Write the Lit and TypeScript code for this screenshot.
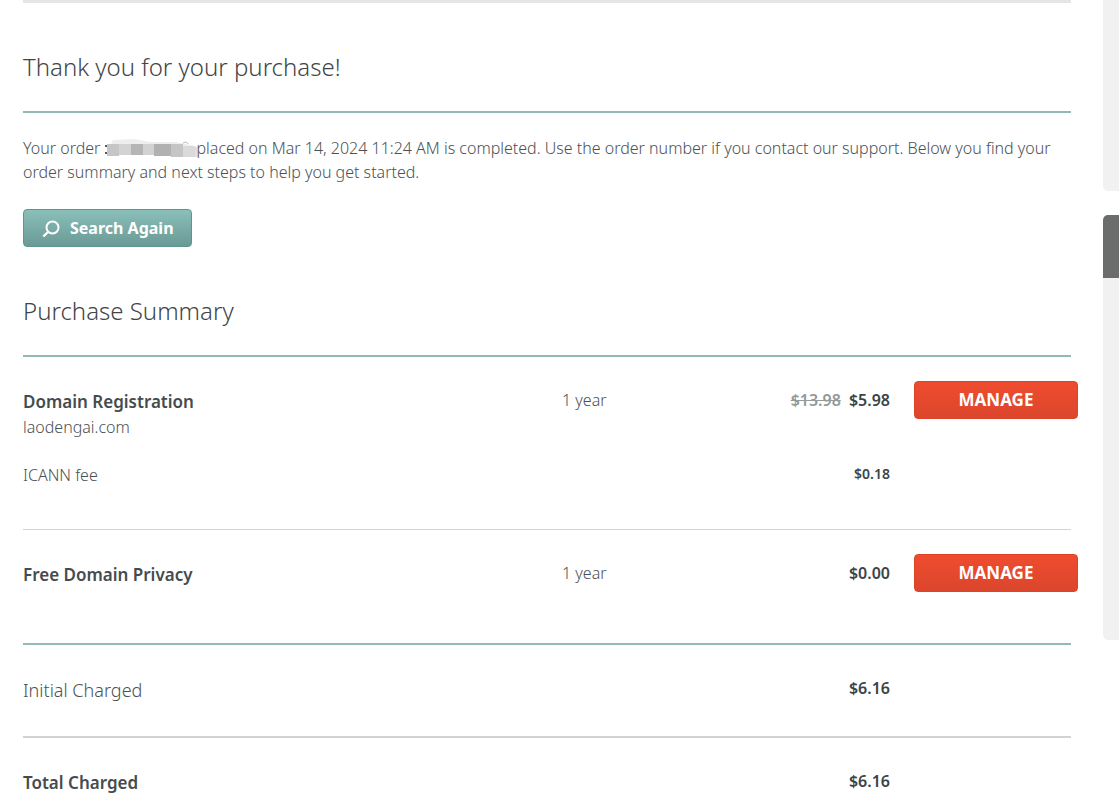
import { LitElement, html, css, svg } from "lit";
import { customElement } from "lit/decorators.js";

interface Cell {
  x: number;
  w: number;
  top: number;
  bottom: number;
  fill: string;
}

const MASK_CELLS: Cell[] = [
  { x: 2, w: 12, top: 6, bottom: 18, fill: "#c6c6c8" },
  { x: 14, w: 12, top: 6, bottom: 17, fill: "#d3d3d4" },
  { x: 26, w: 12, top: 6, bottom: 17, fill: "#b5b5b6" },
  { x: 38, w: 11, top: 6, bottom: 17, fill: "#d2d2d3" },
  { x: 49, w: 17, top: 6, bottom: 18, fill: "#b1b1b2" },
  { x: 66, w: 12, top: 6, bottom: 19, fill: "#c5c5c6" },
  { x: 78, w: 12, top: 8, bottom: 19, fill: "#dadada" },
  { x: 90, w: 3, top: 9, bottom: 19, fill: "#f0dccf" },
];

@customElement("app-root")
export class AppRoot extends LitElement {
  static styles = css`
    :host {
      display: block;
      background: #fff;
      color: #4b5154;
      font-family: "Noto Sans", "Open Sans", sans-serif;
      font-size: 16px;
      font-weight: 300;
      line-height: 24px;
    }
    .page {
      display: flex;
      gap: 32px;
      padding-left: 23px;
      overflow: hidden;
    }
    .main {
      flex: 1;
      min-width: 0;
      border-top: 3px solid #e5e5e5;
    }
    .heading {
      margin: 0;
      padding: 48px 0 28px;
      border-bottom: 2px solid #91bab5;
      font-size: 24px;
      line-height: 32px;
      font-weight: 300;
      color: #3f4548;
    }
    .intro {
      margin: 23px 0 25px;
    }
    .mask {
      display: inline-block;
      vertical-align: -4px;
      overflow: visible;
    }
    .button {
      box-sizing: border-box;
      height: 38px;
      border-radius: 4px;
      font-family: inherit;
      line-height: 24px;
      font-weight: 700;
      color: #fff;
      cursor: pointer;
    }
    .search {
      display: flex;
      align-items: center;
      gap: 10px;
      padding: 0 17px 0 18px;
      border: 1px solid #5f9590;
      background: linear-gradient(#8abfba, #6a9a95);
      font-size: 16px;
    }
    .glyph {
      margin-top: 2px;
    }
    .manage {
      display: block;
      width: 164px;
      padding: 0;
      border: 1px solid #dc4327;
      background: linear-gradient(#ef4c2f, #db462c);
      font-size: 17px;
    }
    .summary {
      width: 100%;
      border-spacing: 0;
      table-layout: fixed;
    }
    .summary th,
    .summary td {
      padding: 0;
      text-align: left;
      vertical-align: top;
      font-weight: 300;
    }
    .col-price {
      width: 160px;
    }
    .col-term {
      width: 168px;
    }
    .col-action {
      width: 181px;
    }
    .summary .item {
      padding-top: 33px;
    }
    .summary .term,
    .summary .price {
      padding-top: 31px;
    }
    .summary .price {
      text-align: right;
      font-weight: 600;
      color: #3d4446;
      white-space: nowrap;
    }
    .summary .action {
      padding: 24px 0 0 24px;
    }
    .name {
      display: block;
      font-size: 17px;
      font-weight: 600;
      color: #454c4e;
    }
    .label {
      display: block;
      font-size: 18px;
    }
    .domain {
      display: block;
      margin-top: 1px;
    }
    .old {
      margin-right: 4px;
      color: #949a9a;
    }
    .summary .fee th,
    .summary .fee td {
      padding: 24px 0 42px;
      border-bottom: 1px solid #d3d3d3;
    }
    .summary .fee .price {
      padding-top: 23px;
      font-size: 14px;
    }
    .summary .privacy th,
    .summary .privacy td {
      padding-bottom: 51px;
      border-bottom: 2px solid #91bab8;
    }
    .summary .charge .item {
      padding-bottom: 34px;
    }
    .summary .initial th,
    .summary .initial td {
      border-bottom: 2px solid #d3d3d3;
    }
    .summary .total .item {
      padding-bottom: 8px;
    }
    .rail {
      flex: none;
      width: 16px;
    }
    .panel {
      height: 191px;
      border-radius: 0 0 0 5px;
      background: #f1f1f1;
    }
    .tab {
      height: 63px;
      margin-top: 24px;
      border-radius: 5px 0 0 0;
      background: #6b6d6d;
    }
    .tall {
      height: 362px;
    }
  `;

  private mask() {
    return html`<svg class="mask" width="92" height="20" viewBox="0 0 92 20" role="img" aria-label="hidden order number">
      <path d="M8 2 L30 1 L44 4 L70 4 L86 7 L93 9 L93 12 L3 12 Z" fill="#eeeeee" />
      <path d="M0 7h2v2H0zM0 14h2v2H0z" fill="#55595c" />
      <path d="M78 5q4 -2 5 1" fill="none" stroke="#b9b9b9" />
      ${MASK_CELLS.map(
        (c) => svg`<rect x=${c.x} y=${c.top} width=${c.w} height=${c.bottom - c.top} fill=${c.fill} />`
      )}
    </svg>`;
  }

  render() {
    return html`
      <div class="page">
        <main class="main">
          <h1 class="heading">Thank you for your purchase!</h1>
          <p class="intro">
            Your order ${this.mask()}placed on Mar 14, 2024 11:24 AM is completed. Use the order number if you contact
            our support. Below you find your order summary and next steps to help you get started.
          </p>
          <button class="button search" type="button">
            <svg class="glyph" width="18" height="18" viewBox="0 0 18 18" fill="none" stroke="#fff" aria-hidden="true">
              <circle cx="10.5" cy="7.5" r="6" stroke-width="2" />
              <path d="M6 12 L1.3 16.5" stroke-width="2.4" />
            </svg>
            Search Again
          </button>
          <h2 class="heading">Purchase Summary</h2>
          <table class="summary">
            <colgroup>
              <col />
              <col class="col-term" />
              <col class="col-price" />
              <col class="col-action" />
            </colgroup>
            <tbody>
              <tr>
                <th class="item" scope="row">
                  <span class="name">Domain Registration</span>
                  <span class="domain">laodengai.com</span>
                </th>
                <td class="term">1 year</td>
                <td class="price"><s class="old">$13.98</s> $5.98</td>
                <td class="action"><button class="button manage" type="button">MANAGE</button></td>
              </tr>
              <tr class="fee">
                <th scope="row">ICANN fee</th>
                <td></td>
                <td class="price">$0.18</td>
                <td></td>
              </tr>
              <tr class="privacy">
                <th class="item" scope="row"><span class="name">Free Domain Privacy</span></th>
                <td class="term">1 year</td>
                <td class="price">$0.00</td>
                <td class="action"><button class="button manage" type="button">MANAGE</button></td>
              </tr>
              <tr class="charge initial">
                <th class="item" scope="row"><span class="label">Initial Charged</span></th>
                <td></td>
                <td class="price">$6.16</td>
                <td></td>
              </tr>
              <tr class="charge total">
                <th class="item" scope="row"><span class="name">Total Charged</span></th>
                <td></td>
                <td class="price">$6.16</td>
                <td></td>
              </tr>
            </tbody>
          </table>
        </main>
        <aside class="rail">
          <div class="panel"></div>
          <div class="tab"></div>
          <div class="panel tall"></div>
        </aside>
      </div>
    `;
  }
}
